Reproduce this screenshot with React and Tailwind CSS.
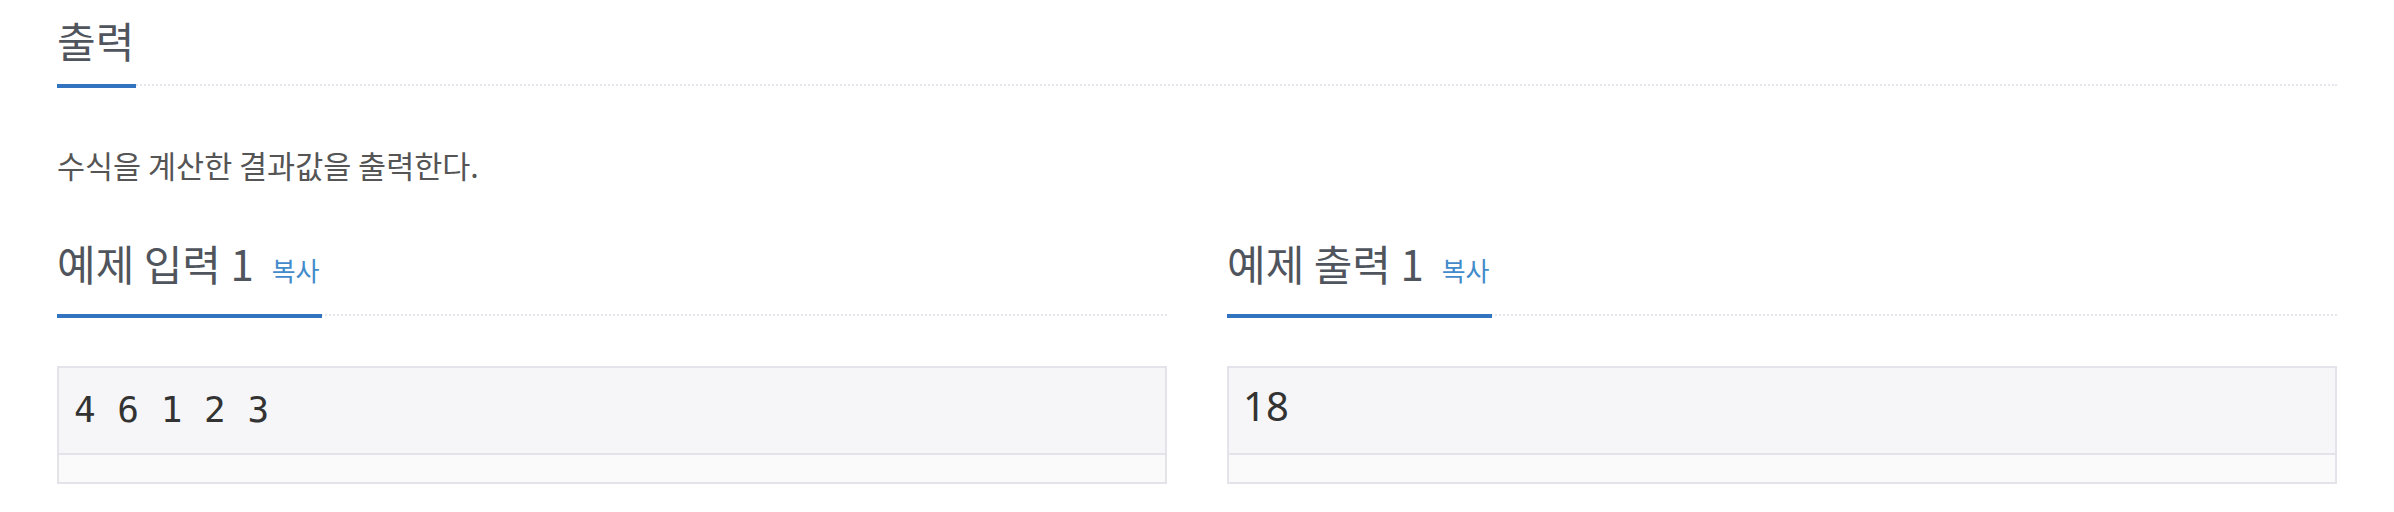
import React from "react";

const KR = "font-['Noto_Sans_CJK_KR','Noto_Sans',sans-serif]";

function Headline({ title, copy }) {
  return (
    <div className="flex border-b-2 border-dotted border-[#e6e6ec]">
      <h2
        className={`${KR} -mb-[4px] border-b-4 border-[#3274c0] pb-[16px] pr-[2px] text-[42px] font-normal leading-[56px] text-[#50555d]`}
      >
        {title}
        {copy && (
          <span className="ml-[18px] text-[26px] text-[#428bca]">복사</span>
        )}
      </h2>
    </div>
  );
}

function SampleBox({ children, mono }) {
  return (
    <div className="border-2 border-[#e3e3e9] bg-[#f6f6f8]">
      <div
        className={`h-[87px] border-b-2 border-[#e3e3e9] leading-[48px] text-[#333] ${
          mono
            ? "px-[15px] pt-[18px] text-[36px] font-['DejaVu_Sans_Mono',monospace]"
            : "px-[14px] pt-[14px] text-[40px] font-['Noto_Sans',sans-serif]"
        }`}
      >
        {children}
      </div>
      <div className="h-[27px] bg-[#fafafa]" />
    </div>
  );
}

export default function App() {
  return (
    <div className="min-h-[512px] bg-white px-[57px] pt-[12px]">
      {/* 출력 */}
      <Headline title="출력" />
      <p className={`${KR} mt-[57px] text-[30.5px] leading-[44px] text-[#555]`}>
        수식을 계산한 결과값을 출력한다.
      </p>

      {/* 예제 */}
      <div className="mt-[48px] grid grid-cols-2 gap-[60px]">
        <div>
          <Headline title="예제 입력 1" copy />
          <div className="mt-[50px]">
            <SampleBox mono>4 6 1 2 3</SampleBox>
          </div>
        </div>
        <div>
          <Headline title="예제 출력 1" copy />
          <div className="mt-[50px]">
            <SampleBox>18</SampleBox>
          </div>
        </div>
      </div>
    </div>
  );
}
